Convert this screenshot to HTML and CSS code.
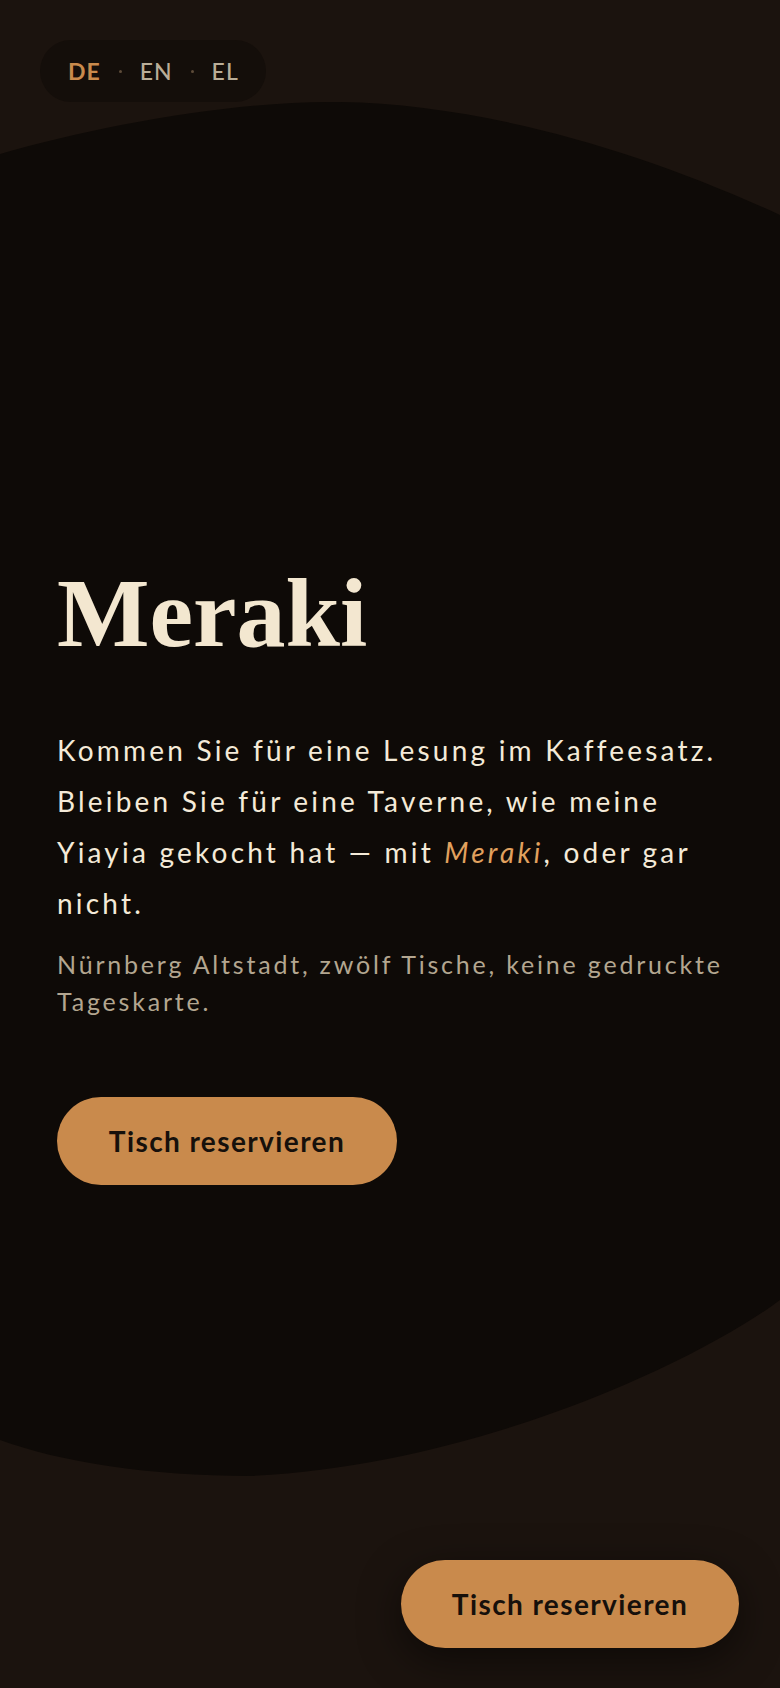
FILE: index.html
```html
<!DOCTYPE html>
<html lang="de">
<head>
<meta charset="utf-8">
<title>Meraki</title>
<link rel="stylesheet" href="styles.css">
</head>
<body>
<div class="page">
  <svg class="blob" viewBox="0 0 780 1688" width="780" height="1688" aria-hidden="true">
    <path d="M0,154 C100,125 240,100 340,102 C480,104 640,150 780,215 L780,1300 C700,1360 480,1465 250,1476 C150,1476 60,1462 0,1440 Z" fill="#0e0a07"/>
  </svg>
  <header class="topbar">
    <nav class="lang">
      <span class="lang-item active">DE</span>
      <span class="lang-dot"></span>
      <span class="lang-item">EN</span>
      <span class="lang-dot"></span>
      <span class="lang-item">EL</span>
    </nav>
  </header>
  <main class="hero">
    <h1 class="title">Meraki</h1>
    <p class="lead">Kommen Sie für eine Lesung im Kaffeesatz. Bleiben Sie für eine Taverne, wie meine Yiayia gekocht hat — mit <em>Meraki</em>, oder gar nicht.</p>
    <p class="meta">Nürnberg Altstadt, zwölf Tische, keine gedruckte Tageskarte.</p>
    <a class="btn" href="#">Tisch reservieren</a>
  </main>
  <a class="btn btn-float" href="#">Tisch reservieren</a>
</div>
</body>
</html>
```
FILE: styles.css
```css
html, body {
  margin: 0;
  padding: 0;
  background: #1b130e;
}
body {
  font-family: Lato, "Noto Sans", sans-serif;
  color: #f4ead8;
}
.page {
  position: relative;
  width: 780px;
  height: 1688px;
  overflow: hidden;
}
.blob {
  position: absolute;
  top: 0;
  left: 0;
  z-index: 0;
}
.topbar {
  position: relative;
  z-index: 1;
  padding: 40px 0 0 40px;
  display: flex;
}
.lang {
  display: flex;
  align-items: center;
  gap: 18px;
  height: 62px;
  padding: 0 27px 0 28px;
  border-radius: 31px;
  background: #140e0a;
}
.lang-item {
  font-size: 23px;
  font-weight: 500;
  letter-spacing: 1px;
  color: #b9ad98;
}
.lang-item.active {
  color: #c98a4c;
  font-weight: 700;
}
.lang-dot {
  width: 3px;
  height: 3px;
  border-radius: 50%;
  background: #5e4c3a;
}
.hero {
  position: relative;
  z-index: 1;
  padding: 462px 40px 0 57px;
  display: flex;
  flex-direction: column;
  align-items: flex-start;
}
.title {
  margin: 0;
  font-family: "Liberation Serif", serif;
  font-weight: 700;
  font-size: 98px;
  line-height: 1;
  color: #f3e7d0;
}
.lead {
  margin: 63px 0 0 0;
  font-size: 28px;
  line-height: 51px;
  letter-spacing: 3.2px;
  color: #f4ead8;
}
.lead em {
  color: #e1a15e;
  font-style: italic;
}
.meta {
  margin: 17px 0 0 0;
  font-size: 25px;
  line-height: 37px;
  letter-spacing: 2.8px;
  color: #b3a690;
}
.btn {
  display: inline-flex;
  align-items: center;
  justify-content: center;
  box-sizing: border-box;
  width: 340px;
  height: 88px;
  border-radius: 44px;
  background: #c98a4c;
  color: #16100b;
  font-size: 28px;
  font-weight: 700;
  letter-spacing: 1.4px;
  text-decoration: none;
  margin-top: 77px;
}
.btn-float {
  position: absolute;
  right: 41px;
  bottom: 40px;
  margin: 0;
  z-index: 2;
  width: 338px;
  box-shadow: 0 12px 40px rgba(0, 0, 0, 0.5);
}
```
